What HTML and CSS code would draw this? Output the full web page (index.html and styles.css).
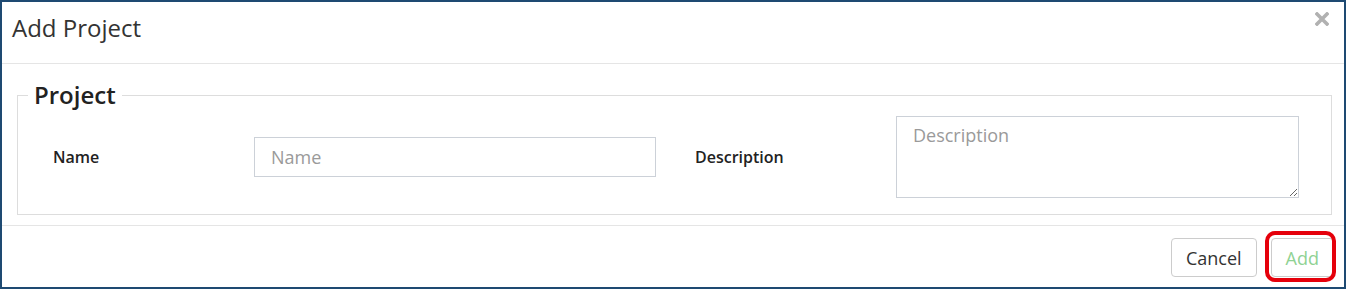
FILE: index.html
```html
<!DOCTYPE html>
<html>

<head>
    <title>Add Project</title>
    <link rel="stylesheet" href="styles.css">
</head>

<body>
    <div class="modal">
        <div class="modal-header">
            <h4 class="modal-title">Add Project</h4>
            <button class="close" type="button">
                <svg width="14" height="14" viewBox="0 0 14 14">
                    <path d="M2 2 L12 12 M12 2 L2 12" stroke="#b1b1b1" stroke-width="3.6" stroke-linecap="square" fill="none" />
                </svg>
            </button>
        </div>
        <div class="modal-body">
            <fieldset class="project">
                <legend>Project</legend>
                <div class="form-row">
                    <label class="form-label">Name</label>
                    <input class="form-input" type="text" placeholder="Name">
                    <label class="form-label second">Description</label>
                    <textarea class="form-input form-area" placeholder="Description"></textarea>
                </div>
            </fieldset>
        </div>
        <div class="modal-footer">
            <button class="btn" type="button">Cancel</button>
            <button class="btn btn-add" type="button">Add</button>
        </div>
    </div>
</body>

</html>
```

FILE: styles.css
```css
html,
body {
    margin: 0;
    padding: 0;
    background: #ffffff;
}

body {
    font-family: 'Open Sans', 'Liberation Sans', sans-serif;
    color: #333333;
}

.modal {
    width: 1346px;
    height: 289px;
    box-sizing: border-box;
    border: 2px solid #1e4a72;
    background: #ffffff;
    display: flex;
    flex-direction: column;
}

.modal-header {
    height: 62px;
    box-sizing: border-box;
    border-bottom: 1px solid #e5e5e5;
    padding: 0 15px 0 10px;
    display: flex;
    align-items: flex-start;
}

.modal-title {
    margin: 0;
    padding-top: 9px;
    font-size: 24px;
    font-weight: 400;
    line-height: 33px;
    color: #333333;
}

.close {
    margin-left: auto;
    margin-top: 10px;
    padding: 0;
    border: none;
    background: none;
    width: 14px;
    height: 14px;
    cursor: pointer;
}

.close svg {
    display: block;
}

.modal-body {
    padding: 16px 12px 10px 15px;
}

.project {
    margin: 0;
    border: 1px solid #dddddd;
    padding: 6px 10px 16px 10px;
}

.project legend {
    padding: 0 6px;
    font-size: 24px;
    font-weight: 600;
    line-height: 30px;
    color: #222222;
}

.form-row {
    display: flex;
    align-items: center;
    margin-left: 25px;
}

.form-label {
    width: 201px;
    font-size: 16px;
    font-weight: 600;
    color: #222222;
}

.form-label.second {
    margin-left: 39px;
}

.form-input {
    width: 402px;
    height: 40px;
    box-sizing: border-box;
    border: 1px solid #ccd1d8;
    border-radius: 0;
    padding: 0 16px;
    font-family: inherit;
    font-size: 18px;
    color: #333333;
    outline: none;
}

.form-input::placeholder {
    color: #9a9a9a;
}

.form-area {
    width: 403px;
    height: 82px;
    padding: 5px 16px;
    line-height: 1.5;
    resize: both;
}

.modal-footer {
    flex: 1;
    border-top: 1px solid #e5e5e5;
    padding: 12px 10px 0 0;
    display: flex;
    justify-content: flex-end;
    align-items: flex-start;
    gap: 14px;
}

.btn {
    height: 39px;
    padding: 0 14px;
    border: 1px solid #cccccc;
    border-radius: 4px;
    background: #ffffff;
    font-family: inherit;
    font-size: 18px;
    color: #333333;
    cursor: pointer;
}

.btn-add {
    position: relative;
    color: #8fd293;
}

.btn-add::after {
    content: '';
    position: absolute;
    top: -8px;
    left: -7px;
    right: -3px;
    bottom: -6px;
    border: 4px solid #e5000b;
    border-radius: 10px;
}
```
